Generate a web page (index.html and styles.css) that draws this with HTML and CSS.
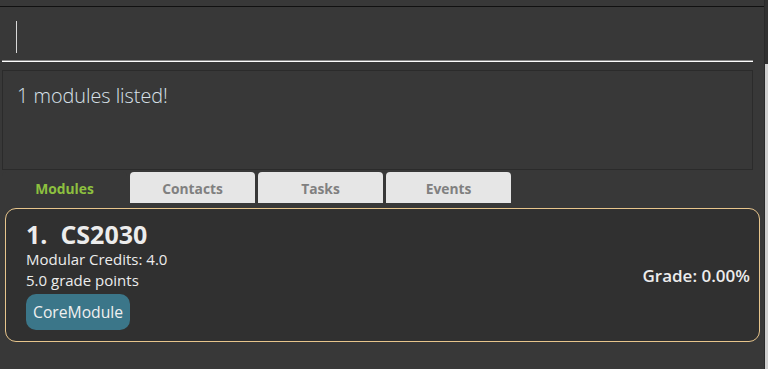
FILE: index.html
```html
<!DOCTYPE html>
<html>
<head>
<meta charset="utf-8">
<link rel="stylesheet" href="styles.css">
</head>
<body>
<div class="window">
  <div class="main">
    <div class="menubar"></div>
    <div class="command">
      <div class="caret"></div>
    </div>
    <div class="result">1 modules listed!</div>
    <div class="tabs">
      <div class="tab active">Modules</div>
      <div class="tab">Contacts</div>
      <div class="tab">Tasks</div>
      <div class="tab">Events</div>
    </div>
    <div class="content">
      <div class="card">
        <div class="info">
          <div class="title">1.&nbsp; CS2030</div>
          <div class="line">Modular Credits: 4.0</div>
          <div class="line">5.0 grade points</div>
          <div class="tags"><span class="tag">CoreModule</span></div>
        </div>
        <div class="grade">Grade: 0.00%</div>
      </div>
    </div>
  </div>
  <div class="scrollbar"><div class="thumb"></div></div>
</div>
</body>
</html>
```
FILE: styles.css
```css
html, body {
  margin: 0;
  padding: 0;
  background: #383838;
  width: 768px;
  height: 369px;
  overflow: hidden;
  font-family: "Open Sans", "Noto Sans", sans-serif;
}
.window {
  display: flex;
  height: 369px;
}
.main {
  width: 764px;
  display: flex;
  flex-direction: column;
}
.scrollbar {
  width: 3px;
  border-left: 1px solid #2a2a2a;
  background: #313131;
  display: flex;
  flex-direction: column;
  padding-top: 64px;
}
.thumb {
  flex: 1;
  background: #cfcfcf;
}
.menubar {
  height: 6px;
  border-bottom: 1px solid #111;
  background: #383838;
}
.command {
  margin: 0 11px 0 2px;
  border-bottom: 1px solid #ffffff;
  box-shadow: 0 -1px 0 #8a8a8a inset;
  padding: 14px 0 0 14px;
  box-sizing: content-box;
  height: 40px;
}
.caret {
  width: 1px;
  height: 32px;
  background: #d8d8d8;
}
.result {
  margin: 8px 11px 0 2px;
  height: 100px;
  border: 1px solid #2b2b2b;
  color: #d9e2ea;
  font-size: 19.8px;
  font-weight: 300;
  padding: 12px 14px;
  box-sizing: border-box;
  line-height: 26px;
}
.tabs {
  display: flex;
  gap: 3px;
  margin: 2px 0 0 2px;
  height: 31px;
}
.tab {
  width: 125px;
  border-radius: 4px 4px 0 0;
  background: #e6e6e6;
  color: #808080;
  font-weight: 700;
  font-size: 13.8px;
  display: flex;
  align-items: center;
  justify-content: center;
  padding-top: 1px;
  box-sizing: border-box;
}
.tab.active {
  background: #383838;
  color: #8dc03f;
}
.content {
  padding: 5px 4px 0 5px;
}
.card {
  height: 134px;
  box-sizing: border-box;
  border: 1px solid #e7c58c;
  border-radius: 11px;
  background: #303030;
  display: flex;
  align-items: center;
  justify-content: space-between;
  padding: 0 9px 0 20px;
}
.info {
  display: flex;
  flex-direction: column;
  align-self: flex-start;
  padding-top: 10px;
}
.title {
  color: #ececec;
  font-weight: 700;
  font-size: 25px;
  line-height: 30px;
}
.line {
  color: #ececec;
  font-size: 15px;
  line-height: 21px;
}
.tags {
  margin-top: 3px;
  display: flex;
}
.tag {
  background: #3b7689;
  color: #f0f0f0;
  font-size: 15.7px;
  border-radius: 10px;
  padding: 0 7px;
  height: 36px;
  line-height: 36px;
}
.grade {
  color: #ececec;
  font-size: 17px;
  font-weight: 600;
}
```
